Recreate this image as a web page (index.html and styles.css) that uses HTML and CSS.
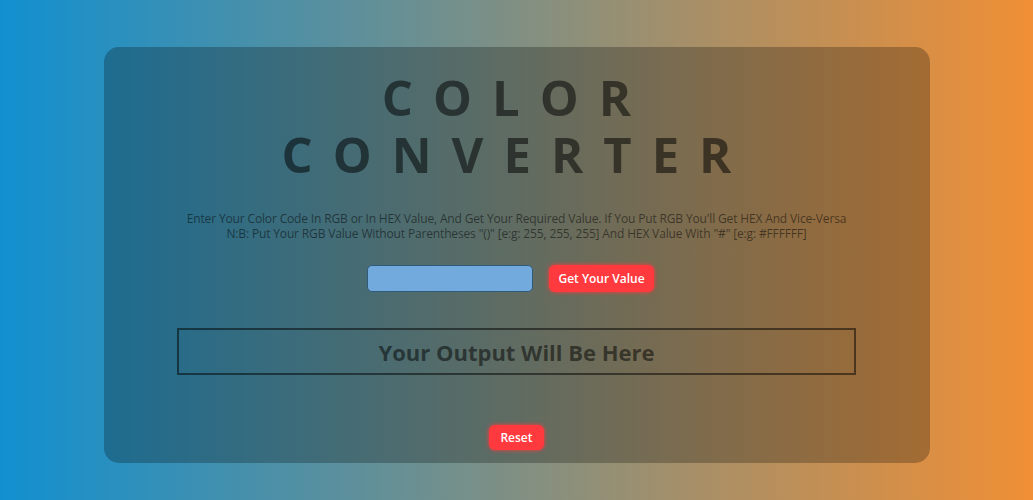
FILE: index.html
```html
<!DOCTYPE html>
<html lang="en">
<head>
<meta charset="utf-8">
<title>Color Converter</title>
<link rel="stylesheet" href="styles.css">
</head>
<body>
<main class="card">
  <h1 class="title"><span class="title-line">COLOR</span><span class="title-line">CONVERTER</span></h1>
  <p class="desc">Enter Your Color Code In RGB or In HEX Value, And Get Your Required Value. If You Put RGB You'll Get HEX And Vice-Versa<br>N:B: Put Your RGB Value Without Parentheses "()" [e:g: 255, 255, 255] And HEX Value With "#" [e:g: #FFFFFF]</p>
  <div class="form">
    <input class="field" type="text">
    <button class="btn">Get Your Value</button>
  </div>
  <div class="output">Your Output Will Be Here</div>
  <button class="btn reset">Reset</button>
</main>
</body>
</html>
```

FILE: styles.css
```css
html, body {
  margin: 0;
  height: 100%;
}
body {
  background: linear-gradient(to right, #1190d0, #f08f35);
  font-family: "Open Sans", "Noto Sans", sans-serif;
  overflow: hidden;
}
.card {
  width: 826px;
  height: 416px;
  margin: 47px auto 0;
  box-sizing: border-box;
  background: rgba(0, 0, 0, 0.25);
  border-radius: 15px;
  display: flex;
  flex-direction: column;
  align-items: center;
  padding-top: 22px;
}
.title {
  margin: 0;
  display: flex;
  flex-direction: column;
  align-items: center;
  font-size: 49px;
  font-weight: 700;
  color: rgba(0, 0, 0, 0.52);
}
.title-line {
  display: block;
  height: 57px;
  line-height: 57px;
  letter-spacing: 20px;
}
.desc {
  margin: 28px 0 0;
  font-size: 12px;
  line-height: 15px;
  letter-spacing: -0.15px;
  text-align: center;
  color: rgba(0, 0, 0, 0.5);
}
.form {
  display: flex;
  gap: 16px;
  margin-top: 24px;
  margin-left: -12px;
}
.field {
  width: 166px;
  height: 27px;
  box-sizing: border-box;
  background: #72aade;
  border: 1px solid #2e5a7c;
  border-radius: 5px;
}
.btn {
  height: 27px;
  padding: 0 9px;
  border: none;
  border-radius: 6px;
  background: #ff3a3e;
  color: #fff;
  font-family: "Open Sans", "Noto Sans", sans-serif;
  font-size: 12px;
  font-weight: 600;
  box-shadow: 0 0 4px #ff3a3e;
}
.output {
  margin-top: 36px;
  width: 679px;
  height: 47px;
  box-sizing: border-box;
  border: 2px solid rgba(0, 0, 0, 0.5);
  display: flex;
  align-items: center;
  justify-content: center;
  font-size: 22px;
  font-weight: 700;
  color: rgba(0, 0, 0, 0.52);
}
.reset {
  margin-top: 50px;
  height: 25px;
  padding: 0 11px;
}
```
